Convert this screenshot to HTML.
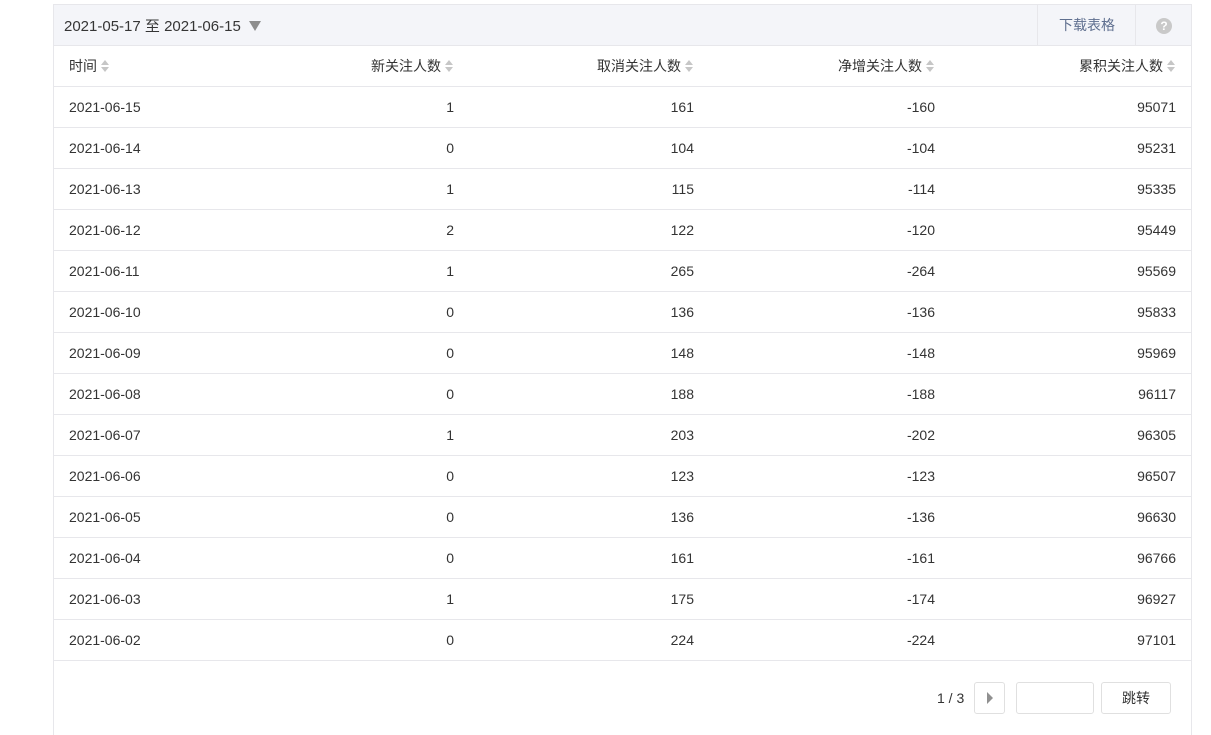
<!DOCTYPE html>
<html><head><meta charset="utf-8"><style>
body{margin:0;background:#fff;font-family:"Liberation Sans","Noto Sans CJK SC",sans-serif;font-size:14px;color:#333;}
.wrap{position:absolute;left:53px;top:4px;width:1137px;height:730px;border:1px solid #e7e7eb;border-bottom:none;}
.hd{height:40px;background:#f4f5f9;border-bottom:1px solid #e7e7eb;position:relative;}
.date{position:absolute;left:10px;top:10px;font-size:15px;color:#353535;}
.tri{display:inline-block;width:0;height:0;border-left:6px solid transparent;border-right:6px solid transparent;border-top:10px solid #8d8d8d;margin-left:8px;vertical-align:0px;}
.dl{position:absolute;left:983px;top:0;width:98px;height:40px;border-left:1px solid #e7e7eb;line-height:40px;text-align:center;color:#5f6f8f;font-size:14px;}
.help{position:absolute;left:1081px;top:0;width:56px;height:40px;border-left:1px solid #e7e7eb;}
.help span{position:absolute;left:20px;top:13px;width:16px;height:16px;border-radius:50%;background:#c9c9c9;color:#fff;font-size:12px;font-weight:bold;line-height:16px;text-align:center;}
table{border-collapse:collapse;width:1137px;}
td,th{height:39px;padding:0 15px 1px;border-bottom:1px solid #e7e7eb;font-weight:normal;text-align:right;font-size:14px;}
td:first-child,th:first-child{text-align:left;}
.s{display:inline-block;width:9px;height:12px;position:relative;margin-left:4px;vertical-align:-1px;}
.s:before,.s:after{content:"";position:absolute;left:0;border-left:4.5px solid transparent;border-right:4.5px solid transparent;}
.s:before{top:0;border-bottom:5px solid #c6c6c6;}
.s:after{top:7px;border-top:5px solid #c6c6c6;}
.pg{position:absolute;top:677px;left:0;width:1137px;height:32px;}
.pn{position:absolute;left:883px;top:8px;}
.nb{position:absolute;left:920px;top:0;width:29px;height:30px;border:1px solid #e0e0e0;border-radius:3px;}
.nb:after{content:"";position:absolute;left:12px;top:9px;border-top:6px solid transparent;border-bottom:6px solid transparent;border-left:6px solid #909090;}
.in{position:absolute;left:962px;top:0;width:76px;height:30px;border:1px solid #e0e0e0;border-radius:3px;}
.jb{position:absolute;left:1047px;top:0;width:68px;height:30px;border:1px solid #e0e0e0;border-radius:3px;text-align:center;line-height:30px;}
</style></head><body>
<div class="wrap">
<div class="hd"><div class="date">2021-05-17 至 2021-06-15<span class="tri"></span></div><div class="dl">下载表格</div><div class="help"><span>?</span></div></div>
<table>
<tr><th style="width:144px">时间<i class="s"></i></th><th style="width:211px">新关注人数<i class="s"></i></th><th style="width:210px">取消关注人数<i class="s"></i></th><th style="width:211px">净增关注人数<i class="s"></i></th><th>累积关注人数<i class="s"></i></th></tr>
<tr><td>2021-06-15</td><td>1</td><td>161</td><td>-160</td><td>95071</td></tr>
<tr><td>2021-06-14</td><td>0</td><td>104</td><td>-104</td><td>95231</td></tr>
<tr><td>2021-06-13</td><td>1</td><td>115</td><td>-114</td><td>95335</td></tr>
<tr><td>2021-06-12</td><td>2</td><td>122</td><td>-120</td><td>95449</td></tr>
<tr><td>2021-06-11</td><td>1</td><td>265</td><td>-264</td><td>95569</td></tr>
<tr><td>2021-06-10</td><td>0</td><td>136</td><td>-136</td><td>95833</td></tr>
<tr><td>2021-06-09</td><td>0</td><td>148</td><td>-148</td><td>95969</td></tr>
<tr><td>2021-06-08</td><td>0</td><td>188</td><td>-188</td><td>96117</td></tr>
<tr><td>2021-06-07</td><td>1</td><td>203</td><td>-202</td><td>96305</td></tr>
<tr><td>2021-06-06</td><td>0</td><td>123</td><td>-123</td><td>96507</td></tr>
<tr><td>2021-06-05</td><td>0</td><td>136</td><td>-136</td><td>96630</td></tr>
<tr><td>2021-06-04</td><td>0</td><td>161</td><td>-161</td><td>96766</td></tr>
<tr><td>2021-06-03</td><td>1</td><td>175</td><td>-174</td><td>96927</td></tr>
<tr><td>2021-06-02</td><td>0</td><td>224</td><td>-224</td><td>97101</td></tr>
</table>
<div class="pg"><span class="pn">1 / 3</span><div class="nb"></div><div class="in"></div><div class="jb">跳转</div></div>
</div>
</body></html>
